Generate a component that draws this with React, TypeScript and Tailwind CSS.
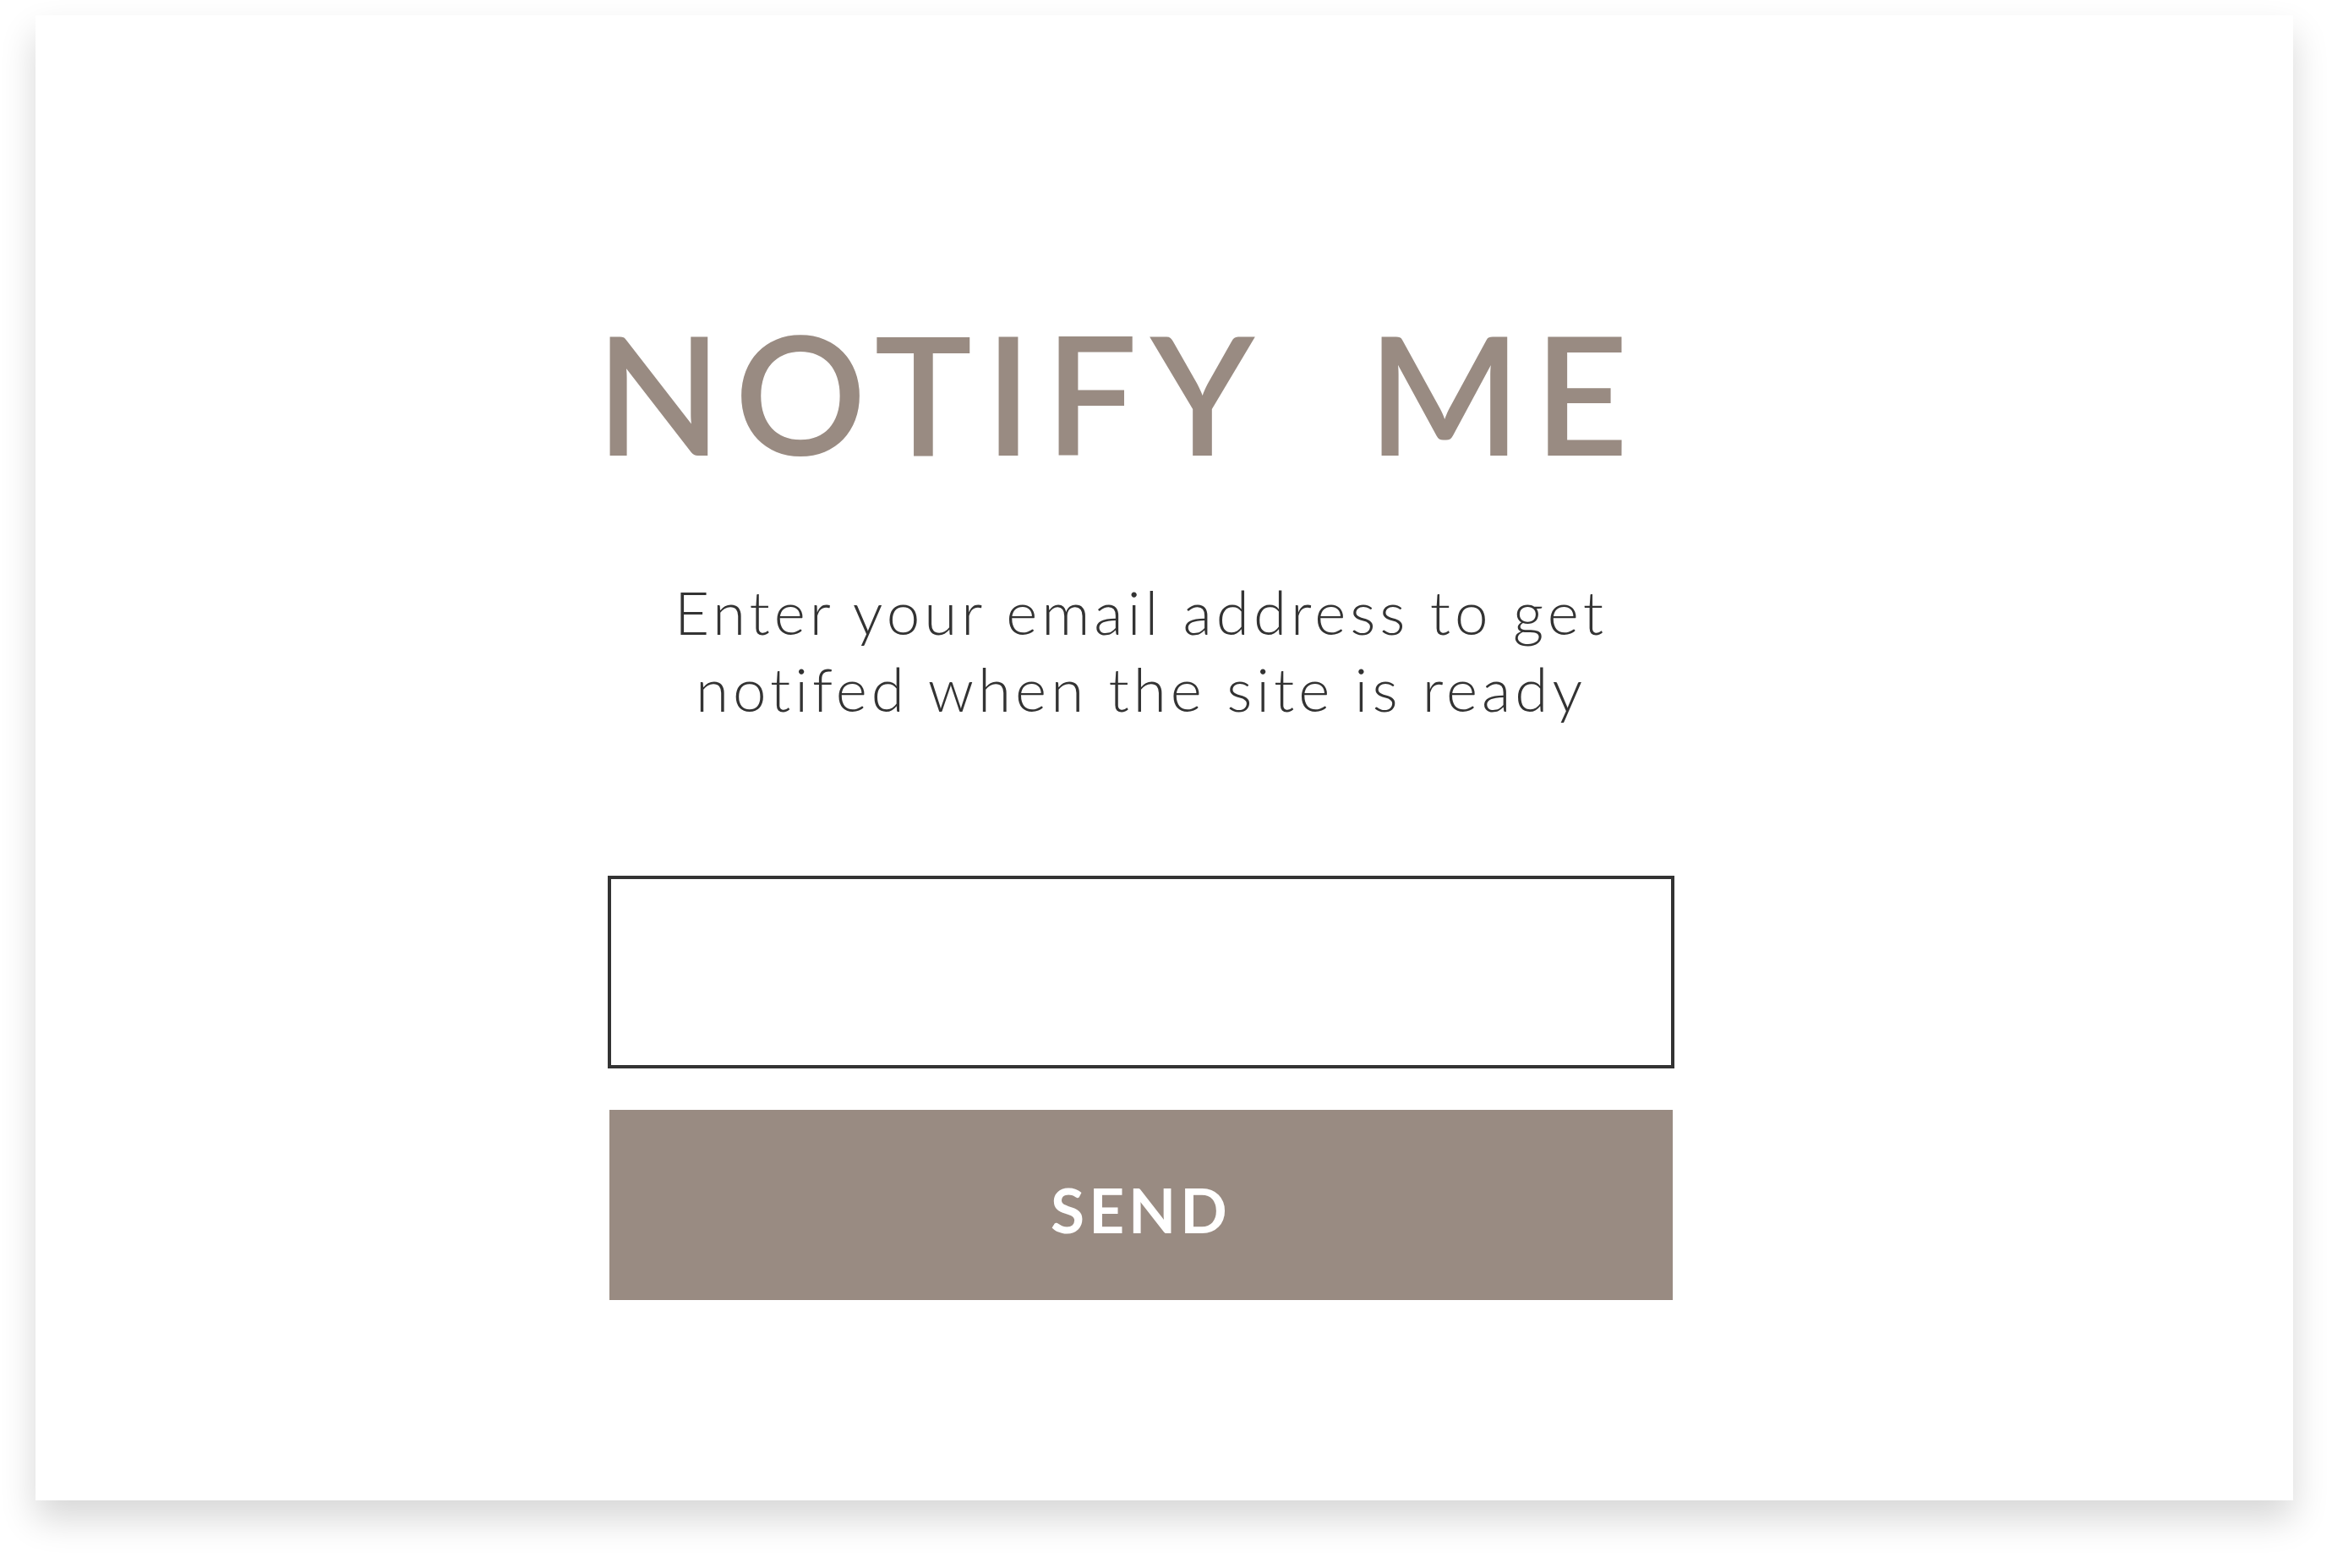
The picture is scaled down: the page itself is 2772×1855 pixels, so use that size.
import React from 'react';

export default function App() {
  return (
    <div className="min-h-screen w-full bg-white">
      <div className="pt-[18px] pl-[42px]">
        <div className="w-[2671px] h-[1757px] bg-white shadow-[0_22px_40px_rgba(0,0,0,0.16)] flex">
          <div className="ml-[677px] w-[1262px] flex flex-col items-stretch">
            {/* Title */}
            <h1 className="mt-[349px] -ml-[14px] text-left text-[194px] leading-none font-semibold tracking-[15px] text-[#998b82] font-['Lato',sans-serif] whitespace-pre">
              {'NOTIFY  ME'}
            </h1>

            {/* Subtitle */}
            <p className="mt-[117px] text-center text-[71px] leading-[91px] font-light tracking-[5px] text-[#333333] font-['Lato',sans-serif]">
              Enter your email address to get
              <br />
              notifed when the site is ready
            </p>

            {/* Email input */}
            <input
              type="email"
              className="mt-[176px] h-[228px] w-full border-[4px] border-[#333333] bg-white outline-none px-8 text-[60px] font-['Lato',sans-serif]"
            />

            {/* Send button */}
            <button className="mt-[49px] mx-[2px] h-[225px] bg-[#998b82] text-white flex items-center justify-center pt-[12px]">
              <span className="text-[73px] leading-none font-bold tracking-[5px] font-['Lato',sans-serif]">SEND</span>
            </button>
          </div>
        </div>
      </div>
    </div>
  );
}
